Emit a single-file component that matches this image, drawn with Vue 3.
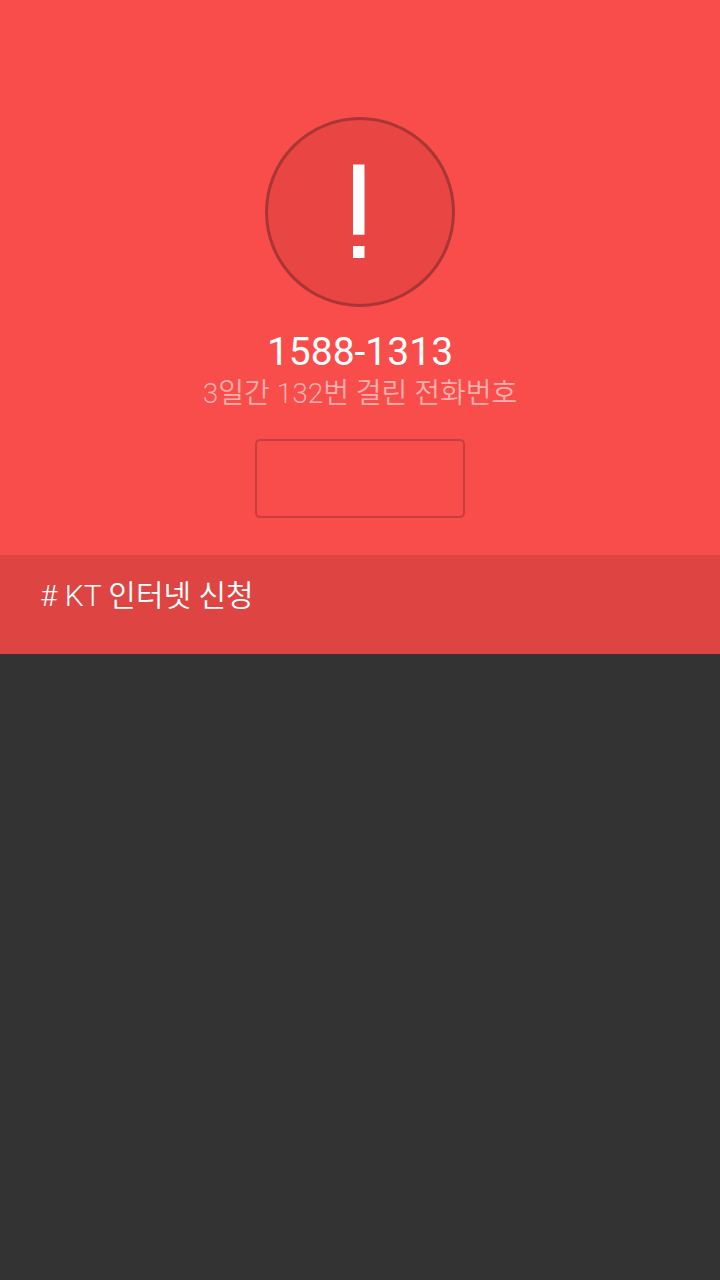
<script setup>
const number = '1588-1313'
const summary = '3일간 132번 걸린 전화번호'
const tag = '# KT 인터넷 신청'
</script>

<template>
  <main class="screen">
    <section class="alert">
      <svg class="badge" viewBox="0 0 190 190" aria-hidden="true">
        <circle cx="95" cy="95" r="93.5" fill="#e84543" stroke="#a93636" stroke-width="3" />
        <path d="M88 47.6h11.5v70.2H88z M88 129h11.5v12H88z" fill="#fff" />
      </svg>
      <h1 class="number">{{ number }}</h1>
      <p class="summary">{{ summary }}</p>
      <button class="action" type="button" aria-label="Action"></button>
    </section>
    <section class="tag">{{ tag }}</section>
  </main>
</template>

<style>
body {
  background: #333333;
}
</style>

<style scoped>
.screen {
  font-family: Roboto, "Noto Sans CJK KR", sans-serif;
  color: #fff;
}
.alert {
  display: flex;
  flex-direction: column;
  align-items: center;
  box-sizing: border-box;
  padding: 117px 16px 37px;
  background: #f84d4a;
}
.badge {
  width: 190px;
  height: 190px;
}
.number {
  margin: 24px 0 0;
  font-size: 39px;
  line-height: 42px;
  font-weight: 400;
}
.summary {
  margin: 1px 0 0;
  font-size: 28px;
  line-height: 40px;
  font-weight: 350;
  color: #feb0ae;
}
.action {
  width: 210px;
  height: 79px;
  margin-top: 25px;
  padding: 0;
  border: 2px solid #c83e3c;
  border-radius: 5px;
  background: transparent;
}
.tag {
  padding: 21px 40px 38px;
  font-size: 30px;
  line-height: 40px;
  font-weight: 350;
  background: #dd4442;
}
</style>
